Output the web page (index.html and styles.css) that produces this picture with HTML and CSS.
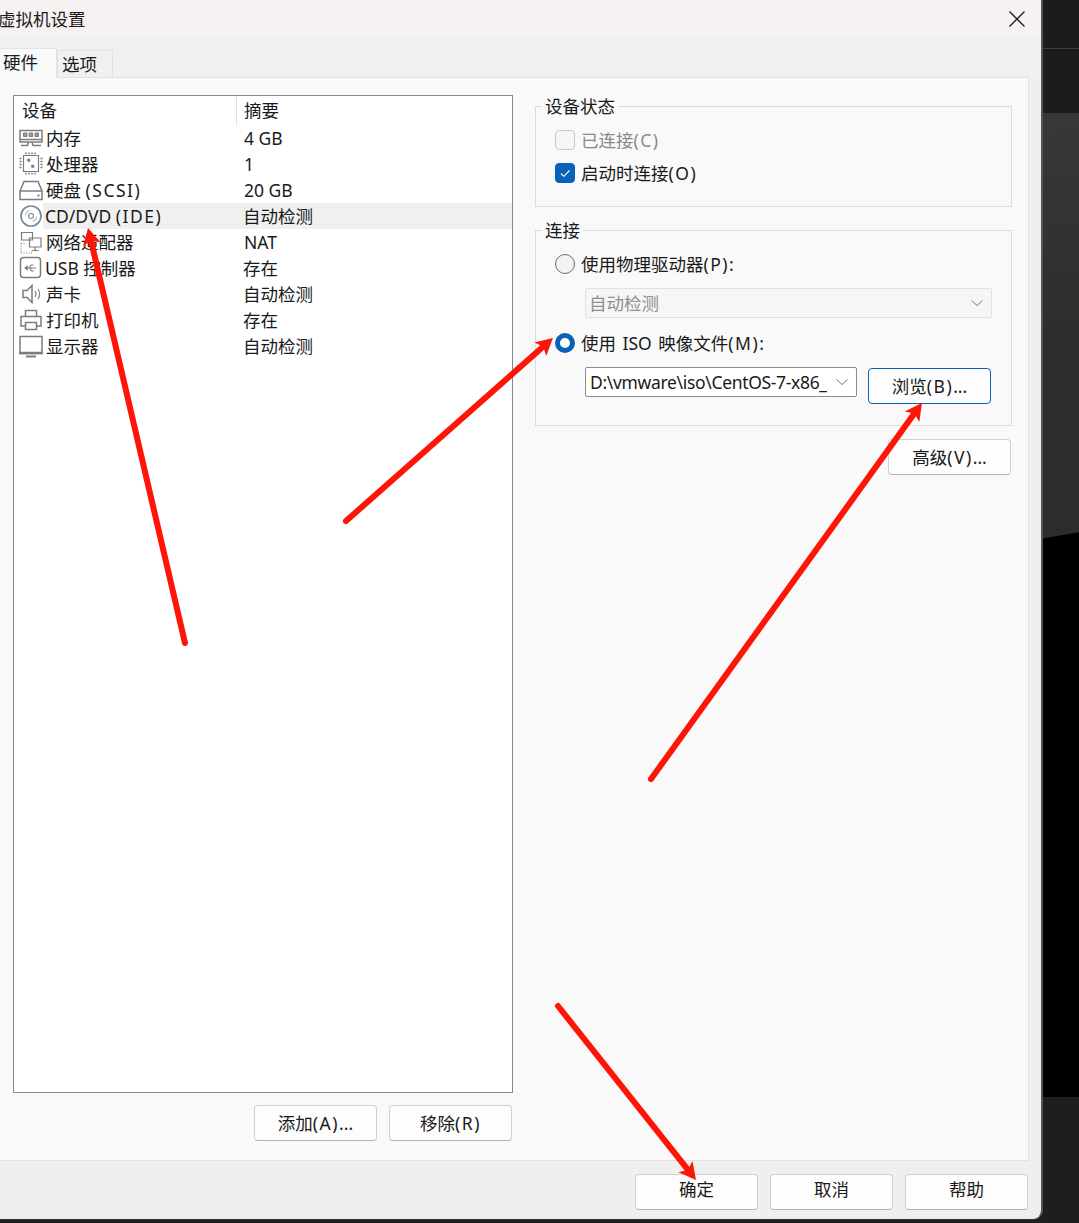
FILE: index.html
```html
<!DOCTYPE html>
<html lang="zh">
<head>
<meta charset="utf-8">
<title>虚拟机设置</title>
<link rel="stylesheet" href="styles.css">
</head>
<body>
<svg width="0" height="0" class="defs">
  <symbol id="i-mem" viewBox="0 0 26 26"><path d="M2 5.500h22v11.500H2zM2 14.500h22M3 20.500h6.500l1-3.500M23 20.500h-8l-1-3.500" /><path d="M5.500 8h3.500v3.500H5.500zM11.200 8h3.500v3.500h-3.500zM17 8h3.500v3.500H17z" fill="#999" stroke-width="1"/></symbol>
  <symbol id="i-cpu" viewBox="0 0 26 26"><path d="M5.500 4.500h15v16h-15z" stroke-width="1.200"/><path d="M8 1.500v1.800M11 1.500v1.800M14 1.500v1.800M17 1.500v1.800M8 21.700v1.800M11 21.700v1.800M14 21.700v1.800M17 21.700v1.800M1.500 7.500h2M1.500 10.500h2M1.500 13.500h2M1.500 16.500h2M22.500 7.500h2M22.500 10.500h2M22.500 13.500h2M22.500 16.500h2"/><path d="M10 8.500h1.500V10H10zM14 14.500h1.500V16H14z" fill="#555"/></symbol>
  <symbol id="i-disk" viewBox="0 0 26 26"><path d="M2 14 6 4.500h14L24 14v8.500H2zM2 14h22"/><path d="M19.500 18.500h2" stroke-width="2"/></symbol>
  <symbol id="i-cd" viewBox="0 0 26 26"><circle cx="13" cy="13" r="10" stroke="#76899b" stroke-width="1.700"/><circle cx="13" cy="13" r="2.500" stroke="#76899b" stroke-width="1.100"/><path d="M7.500 12.500a5.500 5.500 0 0 1 4-4.800M18.500 13.500a5.500 5.500 0 0 1-4 4.800" stroke="#a4b1bd" stroke-width="1.100"/></symbol>
  <symbol id="i-net" viewBox="0 0 26 26"><path d="M3.500 3.500h11v7.500h-11zM11.500 9h11.500v9H11.500zM17 18v3M13.500 21.500h7" stroke-width="1.200"/><path d="M3 14.500h5M3 14.500v9M3 24h12" stroke-dasharray="1 1.500" stroke-width="1"/></symbol>
  <symbol id="i-usb" viewBox="0 0 26 26"><rect x="2.500" y="2.500" width="20" height="20" rx="3"/><path d="M7 13h11M7 13l2.200-1.700v3.400zM11 13l2-3h2.500M12 13l1.500 3h2.500" stroke-width="1.100"/></symbol>
  <symbol id="i-snd" viewBox="0 0 26 26"><path d="M5 9.500h4l5-5v17l-5-5H5z"/><path d="M17 10c1.300 2 1.300 4 0 6M20 8c2 3 2 7 0 10" stroke-width="1.100"/></symbol>
  <symbol id="i-prn" viewBox="0 0 26 26"><path d="M7.500 9V3.500h11V9M7.500 19H3v-9.500h20V19h-4.500M7.500 15.500h11v7h-11z"/></symbol>
  <symbol id="i-mon" viewBox="0 0 26 26"><path d="M2 3.500h22v16H2z"/><path d="M1 20.500h24" stroke-width="1.800"/><path d="M8 23.500h10" stroke-width="2"/></symbol>
</svg>

<main class="window">
  <header class="titlebar">
    <h1 class="title">虚拟机设置</h1>
    <svg class="close" width="18" height="18" viewBox="0 0 18 18"><path d="M1.500 1.500l15 15M16.500 1.500l-15 15"/></svg>
  </header>
  <nav class="tabs">
    <span class="tab tab-active">硬件</span>
    <span class="tab">选项</span>
  </nav>
  <section class="panel">
    <div class="left">
      <div class="list">
        <div class="list-head">
          <span class="head-name">设备</span>
          <span class="head-sum">摘要</span>
        </div>
        <div class="row"><svg class="ico"><use href="#i-mem"/></svg><div class="cell"><span class="name">内存</span><span class="sum">4 GB</span></div></div>
        <div class="row"><svg class="ico"><use href="#i-cpu"/></svg><div class="cell"><span class="name">处理器</span><span class="sum">1</span></div></div>
        <div class="row"><svg class="ico"><use href="#i-disk"/></svg><div class="cell"><span class="name">硬盘 <span class="key">(SCSI)</span></span><span class="sum">20 GB</span></div></div>
        <div class="row"><svg class="ico"><use href="#i-cd"/></svg><div class="cell cell-on"><span class="name name-lat">CD/DVD <span class="key">(IDE)</span></span><span class="sum sum-cjk">自动检测</span></div></div>
        <div class="row"><svg class="ico"><use href="#i-net"/></svg><div class="cell"><span class="name">网络适配器</span><span class="sum">NAT</span></div></div>
        <div class="row"><svg class="ico"><use href="#i-usb"/></svg><div class="cell"><span class="name name-lat">USB 控制器</span><span class="sum sum-cjk">存在</span></div></div>
        <div class="row"><svg class="ico"><use href="#i-snd"/></svg><div class="cell"><span class="name">声卡</span><span class="sum sum-cjk">自动检测</span></div></div>
        <div class="row"><svg class="ico"><use href="#i-prn"/></svg><div class="cell"><span class="name">打印机</span><span class="sum sum-cjk">存在</span></div></div>
        <div class="row"><svg class="ico"><use href="#i-mon"/></svg><div class="cell"><span class="name">显示器</span><span class="sum sum-cjk">自动检测</span></div></div>
      </div>
      <div class="list-actions">
        <button class="btn">添加<span class="key">(A)</span>...</button>
        <button class="btn">移除<span class="key">(R)</span></button>
      </div>
    </div>
    <div class="right">
      <fieldset class="group group-status">
        <legend class="legend">设备状态</legend>
        <div class="opt opt-off"><span class="check"></span><span>已连接<span class="key">(C)</span></span></div>
        <div class="opt opt-next"><span class="check check-on"><svg width="20" height="20" viewBox="0 0 20 20"><path d="M6 10.500l2.800 2.800L14.500 7.500"/></svg></span><span>启动时连接<span class="key">(O)</span></span></div>
      </fieldset>
      <fieldset class="group group-conn">
        <legend class="legend">连接</legend>
        <div class="opt"><span class="radio"></span><span>使用物理驱动器<span class="key">(P):</span></span></div>
        <div class="select select-off"><span>自动检测</span><svg class="chev" width="14" height="8" viewBox="0 0 14 8"><path d="M1.500 1.500 7 6.500l5.500-5"/></svg></div>
        <div class="opt opt-iso"><span class="radio radio-on"></span><span class="wide">使用 ISO 映像文件<span class="key">(M):</span></span></div>
        <div class="iso-row">
          <div class="select select-file"><span class="path">D:\vmware\iso\CentOS-7-x86_</span><svg class="chev" width="14" height="8" viewBox="0 0 14 8"><path d="M1.500 1.500 7 6.500l5.500-5"/></svg></div>
          <button class="btn btn-focus">浏览<span class="key">(B)</span>...</button>
        </div>
      </fieldset>
      <button class="btn btn-adv">高级<span class="key">(V)</span>...</button>
    </div>
  </section>
  <footer class="footer">
    <button class="btn">确定</button>
    <button class="btn">取消</button>
    <button class="btn">帮助</button>
  </footer>
</main>

<aside class="side">
  <div class="s-a"></div>
  <div class="s-b"></div>
  <div class="s-c"></div>
  <div class="s-d"></div>
  <div class="s-e"></div>
</aside>

<svg class="arrows" width="1079" height="1223" viewBox="0 0 1079 1223">
  <defs>
    <marker id="head" markerUnits="userSpaceOnUse" markerWidth="24" markerHeight="20" viewBox="0 0 24 20" refX="8" refY="10" orient="auto">
      <path d="M18 10 1 1l4 9-4 9z" fill="#ff1408"/>
    </marker>
  </defs>
  <line x1="185" y1="643" x2="90.300" y2="237.700"/>
  <line x1="346" y1="521" x2="545.500" y2="344.600"/>
  <line x1="651" y1="779" x2="916.100" y2="411.100"/>
  <line x1="558" y1="1006" x2="689.800" y2="1172.200"/>
</svg>
</body>
</html>
```

FILE: styles.css
```css
* { box-sizing: border-box; }
html, body { margin: 0; padding: 0; }
body {
  width: 1079px;
  height: 1223px;
  overflow: hidden;
  position: relative;
  display: flex;
  background: #1e1e1e;
  color: #1a1a1a;
  font-family: "Noto Sans", "Noto Sans CJK SC", sans-serif;
  font-size: 17.5px;
  line-height: 24px;
}
.defs { position: absolute; }
.key { letter-spacing: 1.5px; }

.window {
  width: 1043px;
  height: 1219px;
  flex: none;
  display: flex;
  flex-direction: column;
  background: #efefef;
  border-right: 2px solid #555;
  border-bottom-right-radius: 9px;
  box-shadow: 0 1px 0 #333;
  overflow: hidden;
}

.titlebar {
  height: 37px;
  flex: none;
  display: flex;
  align-items: center;
  justify-content: space-between;
  background: #f7f2f1;
  padding-right: 15px;
}
.title { margin: 0 0 0 -2px; font-size: 17.500px; font-weight: 400; }
.close path { fill: none; stroke: #1a1a1a; stroke-width: 1.300; }

.tabs {
  height: 40px;
  flex: none;
  display: flex;
  align-items: flex-end;
  background: #f0f0f0;
  position: relative;
}
.tab {
  width: 56px;
  height: 27px;
  border: 1px solid #e2e2e2;
  border-bottom: 0;
  text-align: left;
  line-height: 27px;
  padding-left: 4px;
}
.tab-active {
  width: 58px;
  height: 30px;
  margin-left: -1px;
  margin-bottom: -1px;
  background: #f9f9f9;
  padding-left: 3px;
  position: relative;
  z-index: 1;
}

.panel {
  height: 1084px;
  flex: none;
  margin: 0 12px 0 -1px;
  padding: 17px 16px 19px 13px;
  display: flex;
  gap: 22px;
  background: #f9f9f9;
  border: 1px solid #e2e2e2;
}

.left { width: 500px; flex: none; display: flex; flex-direction: column; gap: 12px; }
.list {
  flex: 1;
  background: #fff;
  border: 1px solid #868692;
}
.list-head { height: 29px; display: flex; line-height: 29px; }
.head-name { width: 223px; padding-left: 8px; border-right: 1px solid #e0e0e0; }
.head-sum { padding-left: 7px; }
.row { height: 26px; display: flex; }
.ico {
  width: 26px;
  height: 26px;
  flex: none;
  margin: 0 -1px 0 4px;
  fill: none;
  stroke: #7c7c7c;
  stroke-width: 1.500;
}
.cell { flex: 1; display: flex; line-height: 26px; }
.cell-on { background: #f0f0f0; }
.name { width: 193px; padding-left: 3px; }
.name-lat { padding-left: 2px; }
.sum { padding-left: 8px; }
.sum-cjk { padding-left: 7px; }
.list-actions { display: flex; justify-content: flex-end; gap: 12px; padding-right: 1px; }

.btn {
  width: 123px;
  height: 36px;
  flex: none;
  padding: 0;
  background: #fdfdfd;
  border: 1px solid #d0d0d0;
  border-bottom-color: #b4b4b4;
  border-radius: 4px;
  color: inherit;
  font: inherit;
}
.btn-focus { margin-left: 11px; margin-top: 1px; border: 1px solid #0a62b8; background: #fdfdfd; }
.btn-adv { display: block; margin: 13px 1px 0 auto; }

.right { width: 477px; flex: none; margin-top: -1px; }
.group { margin: 0; padding: 0; border: 1px solid #dcdcdc; min-width: 0; }
.group-status { padding: 10px 0 21px; }
.group-conn { margin-top: 11px; padding: 10px 0 21px; }
.group-status > .legend, .group-conn > .legend { padding: 0 3px; margin-left: 6px; }
.opt { display: flex; align-items: center; gap: 6px; height: 24px; padding-left: 19px; }
.opt-next { margin-top: 9px; }
.opt-off { color: #8a8a8a; }
.opt-iso { margin-top: 13px; }
.wide { word-spacing: 2px; }
.check {
  width: 20px;
  height: 20px;
  flex: none;
  background: #f6f6f6;
  border: 1px solid #c8c8c8;
  border-radius: 4px;
}
.check-on { background: #0a62b8; border-color: #0a62b8; margin: 0; display: block; }
.check-on svg { display: block; margin: -1px; }
.check-on path { fill: none; stroke: #fff; stroke-width: 1.100; }
.radio {
  width: 20px;
  height: 20px;
  flex: none;
  background: #f3f3f3;
  border: 1px solid #6e6e6e;
  border-radius: 50%;
}
.radio-on { background: #fff; border: 5.500px solid #0a62b8; }
.select {
  height: 30px;
  margin-left: 49px;
  padding: 0 7px 0 4px;
  display: flex;
  align-items: center;
  justify-content: space-between;
  border: 1px solid #e2e2e2;
  border-radius: 2px;
}
.select-off { width: 407px; margin-top: 12px; padding-left: 3px; color: #8f8f8f; background: #f6f6f6; }
.select-file { width: 272px; margin-left: 0; background: #fff; border-color: #8c8c8c; }
.path { white-space: nowrap; overflow: hidden; letter-spacing: -0.33px; }
.chev { flex: none; }
.chev path { fill: none; stroke: #777; stroke-width: 1; }
.iso-row { display: flex; align-items: flex-start; margin: 12px 0 0 49px; }

.footer {
  flex: 1;
  display: flex;
  justify-content: flex-end;
  gap: 12px;
  padding: 13px 13px 0 0;
}
.footer .btn { padding-bottom: 6px; }

.side { flex: 1; height: 1223px; display: flex; flex-direction: column; }
.s-a { height: 49px; background: #1c1c1c; border-bottom: 1px solid #3e3e3e; }
.s-b { height: 64px; background: #1c1c1c; }
.s-c { height: 428px; background: linear-gradient(170.5deg, #383838 0, #2c2c2c 250px, #2c2c2c 419px, #000 420px); }
.s-d { height: 556px; background: #000; }
.s-e { flex: 1; background: #1e1e1e; }

.arrows { position: absolute; left: 0; top: 0; pointer-events: none; }
.arrows line {
  stroke: #ff1408;
  stroke-width: 6;
  stroke-linecap: round;
  marker-end: url(#head);
}
```
